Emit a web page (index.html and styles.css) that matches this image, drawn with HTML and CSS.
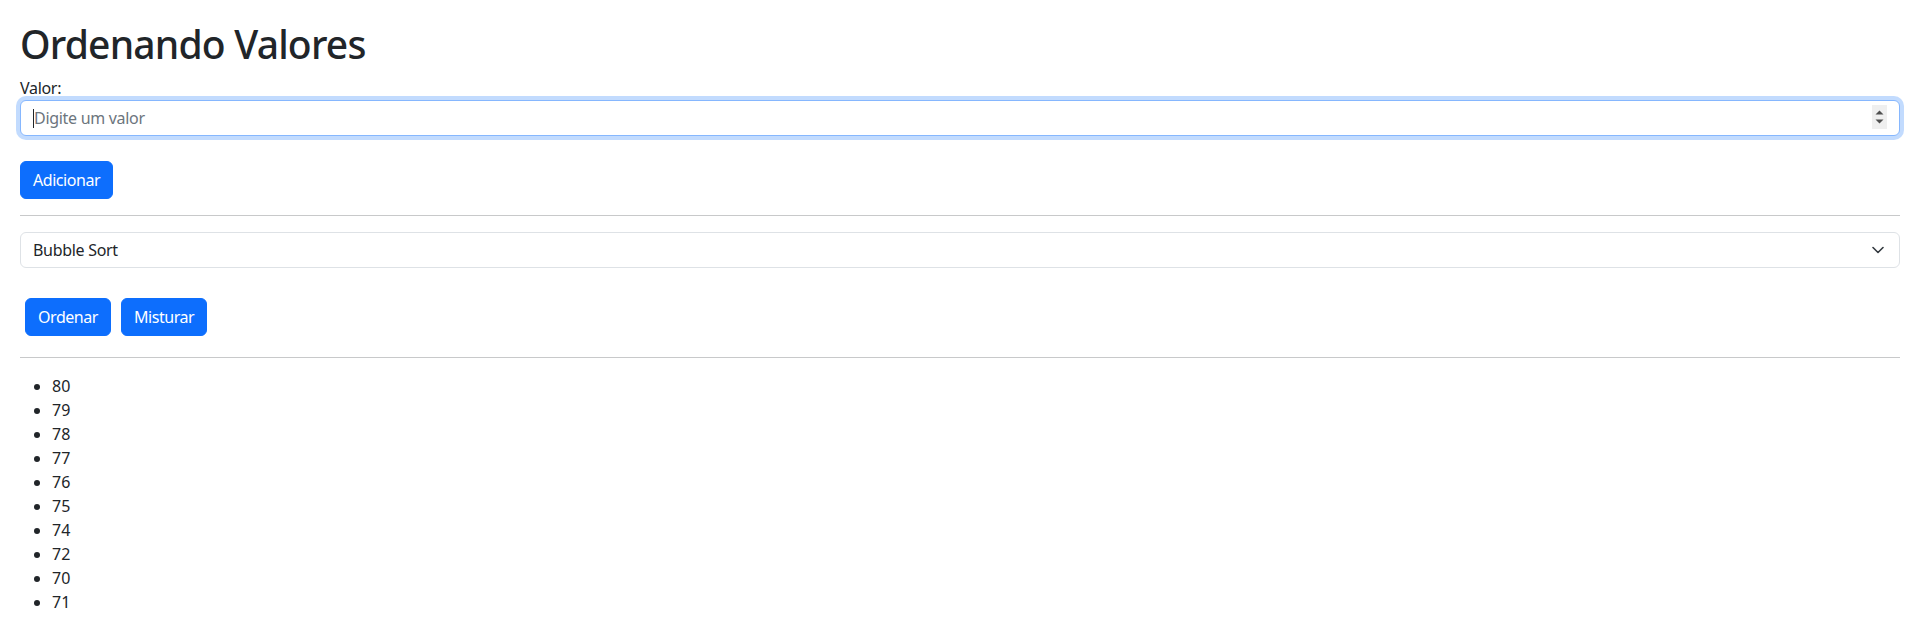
FILE: index.html
```html
<!DOCTYPE html>
<html lang="pt-BR">
<head>
<meta charset="utf-8">
<title>Ordenando Valores</title>
<link rel="stylesheet" href="styles.css">
</head>
<body>
<main class="page">
  <h1 class="title">Ordenando Valores</h1>
  <label class="label" for="valor">Valor:</label>
  <div class="field field-focus">
    <span class="caret"></span>
    <input class="control" id="valor" type="text" placeholder="Digite um valor">
    <span class="spinner">
      <svg width="15" height="24" viewBox="0 0 15 24"><path d="M3.5 9.5 L7.5 5.5 L11.5 9.5 Z" fill="#4f4f4f"/><path d="M3.5 14.5 L7.5 18.5 L11.5 14.5 Z" fill="#4f4f4f"/></svg>
    </span>
  </div>
  <div class="row-add"><button class="btn">Adicionar</button></div>
  <hr class="rule">
  <div class="field field-select">
    <span class="select-text">Bubble Sort</span>
    <svg class="chevron" width="12" height="8" viewBox="0 0 12 8"><path d="M1 1.5 L6 6.5 L11 1.5" fill="none" stroke="#343a40" stroke-width="1.6" stroke-linecap="round" stroke-linejoin="round"/></svg>
  </div>
  <div class="actions">
    <button class="btn">Ordenar</button>
    <button class="btn">Misturar</button>
  </div>
  <hr class="rule rule-2">
  <ul class="values">
    <li>80</li>
    <li>79</li>
    <li>78</li>
    <li>77</li>
    <li>76</li>
    <li>75</li>
    <li>74</li>
    <li>72</li>
    <li>70</li>
    <li>71</li>
  </ul>
</main>
</body>
</html>
```
FILE: styles.css
```css
* { box-sizing: border-box; }
html, body { margin: 0; padding: 0; background: #fff; }
body {
  font-family: "Noto Sans", "Open Sans", sans-serif;
  font-size: 16px;
  line-height: 24px;
  color: #212529;
}
.page { padding: 20px 10px 0 20px; }
.title {
  margin: 0 0 8px;
  font-size: 39px;
  line-height: 48px;
  font-weight: 500;
  letter-spacing: -0.8px;
}
.label { display: block; height: 24px; letter-spacing: -0.3px; }
.field {
  position: relative;
  height: 36px;
  border: 1px solid #dee2e6;
  border-radius: 6px;
  background: #fff;
}
.field-focus {
  border-color: #86b7fe;
  box-shadow: 0 0 0 4px rgba(13, 110, 253, 0.25);
}
.control {
  display: block;
  width: 100%;
  height: 34px;
  border: 0;
  outline: 0;
  padding: 0 40px 0 13px;
  background: transparent;
  font: inherit;
  color: #212529;
  letter-spacing: -0.3px;
}
.control::placeholder { color: #6c757d; opacity: 1; }
.caret {
  position: absolute;
  left: 12px;
  top: 8px;
  width: 1px;
  height: 19px;
  background: #212529;
}
.spinner {
  position: absolute;
  right: 12px;
  top: 4px;
  width: 15px;
  height: 24px;
  background: #efefef;
}
.spinner svg { display: block; }
.row-add { margin-top: 25px; display: flex; }
.btn {
  height: 38px;
  padding: 0 12px;
  border: 1px solid #0d6efd;
  border-radius: 6px;
  background: #0d6efd;
  color: #fff;
  font: inherit;
  letter-spacing: -0.45px;
}
.rule {
  margin: 16px 0;
  border: 0;
  border-top: 1px solid #c8c9ca;
  height: 0;
}
.field-select { display: flex; align-items: center; padding: 0 12px; }
.select-text { flex: 1; letter-spacing: -0.3px; }
.chevron { margin-right: 3px; }
.actions { display: flex; gap: 10px; margin-top: 30px; padding-left: 5px; }
.rule-2 { margin-top: 21px; }
.values { margin: 0; padding-left: 32px; }
.values li { line-height: 24px; }
```
